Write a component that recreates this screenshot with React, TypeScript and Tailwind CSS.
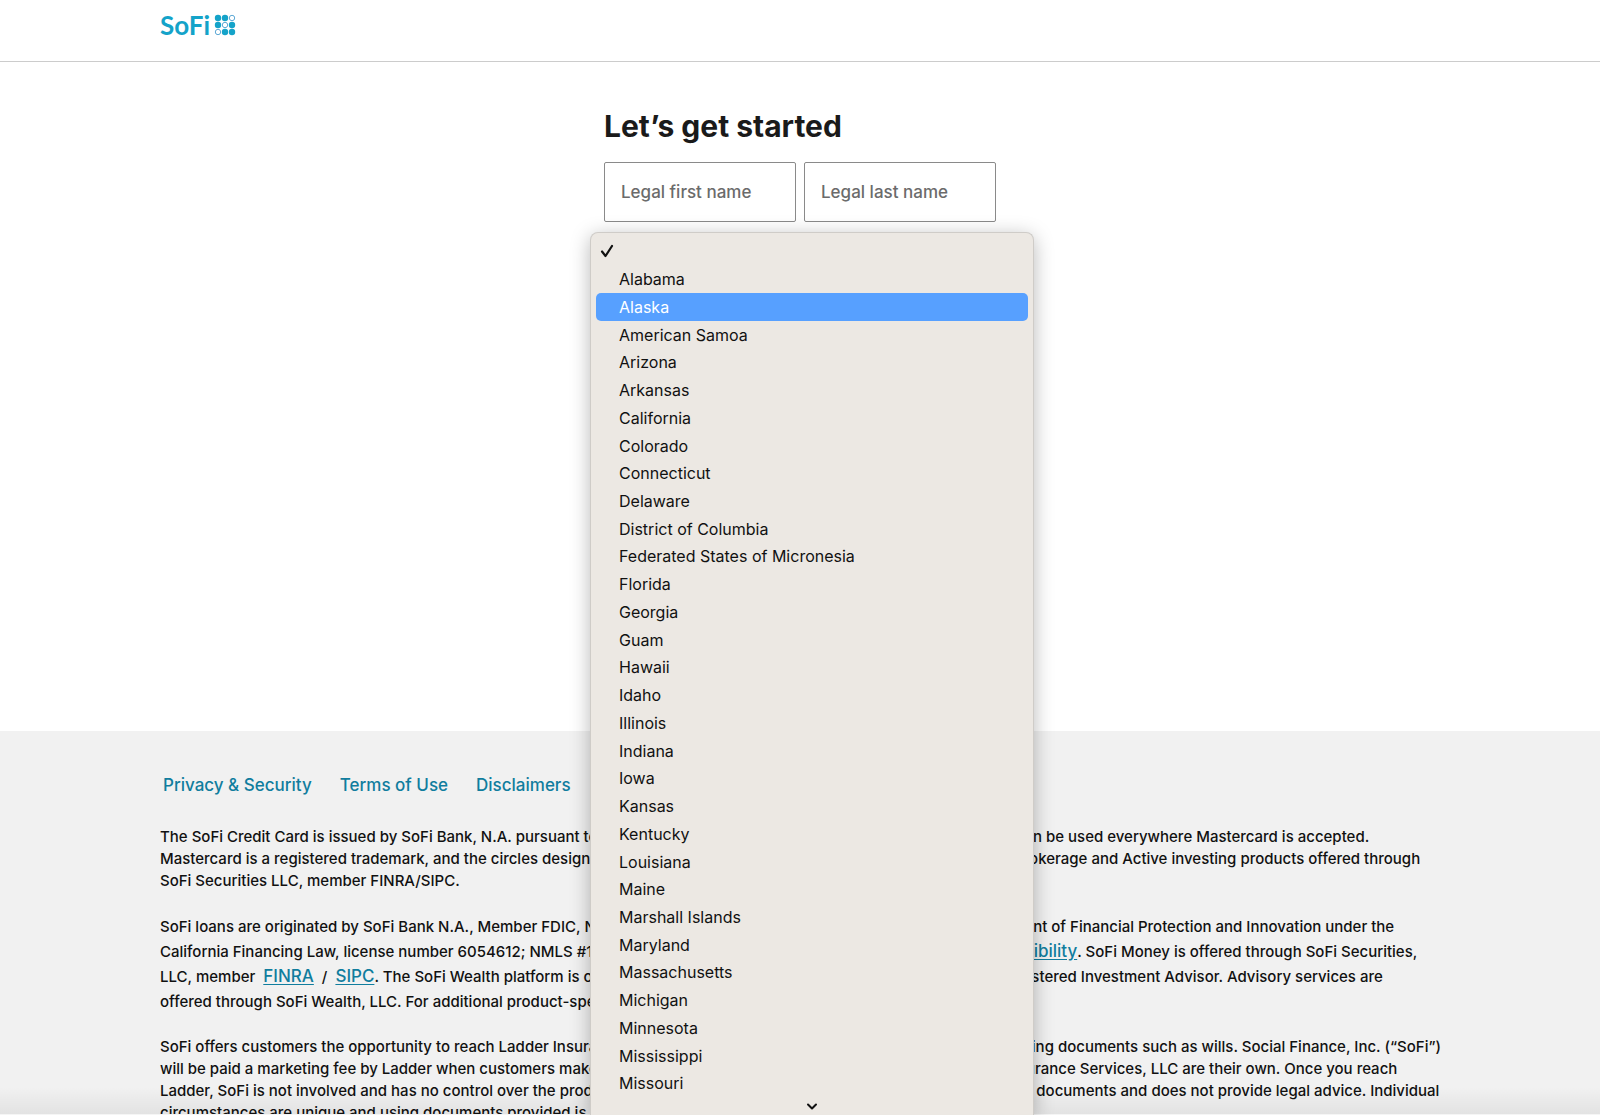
import { useState } from 'react';
import clsx from 'clsx';

const STATES = [
  'Alabama', 'Alaska', 'American Samoa', 'Arizona', 'Arkansas', 'California', 'Colorado', 'Connecticut',
  'Delaware', 'District of Columbia', 'Federated States of Micronesia', 'Florida', 'Georgia', 'Guam',
  'Hawaii', 'Idaho', 'Illinois', 'Indiana', 'Iowa', 'Kansas', 'Kentucky', 'Louisiana', 'Maine',
  'Marshall Islands', 'Maryland', 'Massachusetts', 'Michigan', 'Minnesota', 'Mississippi', 'Missouri',
];

const DOTS = [
  { x: 4, y: 4 }, { x: 11, y: 4 }, { x: 18, y: 4, hollow: true },
  { x: 4, y: 11 }, { x: 11, y: 11, hollow: true }, { x: 18, y: 11 },
  { x: 4, y: 18, hollow: true }, { x: 11, y: 18 }, { x: 18, y: 18 },
];

function Logo() {
  return (
    <a href="#" aria-label="SoFi" className="flex items-center gap-1 font-['Lato',sans-serif] text-[#14a3c9]">
      <span className="text-[26px] leading-8 font-bold">SoFi</span>
      <svg width="22" height="22" viewBox="0 0 22 22" aria-hidden="true">
        {DOTS.map((d) => (
          <circle
            key={`${d.x}-${d.y}`}
            cx={d.x}
            cy={d.y}
            r={d.hollow ? 2.7 : 3.2}
            fill={d.hollow ? 'none' : 'currentColor'}
            stroke={d.hollow ? '#4d9fd0' : 'none'}
            strokeWidth="0.9"
          />
        ))}
      </svg>
    </a>
  );
}

function NameField({ name, label }: { name: string; label: string }) {
  return (
    <input
      name={name}
      type="text"
      aria-label={label}
      placeholder={label}
      className="h-[60px] min-w-0 flex-1 rounded-xs border border-[#8a8a8a] px-4 text-[17px] font-medium text-[#1a1a1a] placeholder:text-[#6b6b6b]"
    />
  );
}

function StateMenu({ active, setActive }: { active: string; setActive: (s: string) => void }) {
  return (
    <div className="absolute top-[232px] bottom-0 left-1/2 ml-[-210px] flex w-[444px] flex-col rounded-t-lg border border-b-0 border-[#cfccc8] bg-[#ece8e3] px-[5px] pt-[5px] text-[16px] text-[#111] shadow-[0_4px_20px_rgba(0,0,0,0.28)]">
      <ul role="listbox" aria-label="State" className="flex min-h-0 flex-1 flex-col">
        <li role="option" aria-selected="true" className="flex flex-1 items-center pb-px pl-1">
          <svg width="14" height="14" viewBox="0 0 14 14" fill="none" stroke="currentColor" strokeWidth="2.2" strokeLinecap="round" strokeLinejoin="round">
            <path d="M2 7.5 L5.5 12 L12 2" />
          </svg>
        </li>
        {STATES.map((state) => (
          <li
            key={state}
            role="option"
            aria-selected="false"
            onMouseEnter={() => setActive(state)}
            className={clsx(
              'flex flex-1 items-center rounded-[5px] pb-px pl-[23px] leading-5',
              state === active && 'bg-[#57a0ff] text-white'
            )}
          >
            {state}
          </li>
        ))}
      </ul>
      <div className="flex h-[17px] justify-center pt-1">
        <svg width="12" height="9" viewBox="0 0 12 9" fill="none" stroke="currentColor" strokeWidth="2" strokeLinecap="round" strokeLinejoin="round">
          <path d="M2 2.5 L6 6.5 L10 2.5" />
        </svg>
      </div>
    </div>
  );
}

function TextLink({ children }: { children: string }) {
  return <a href="#" className="text-[17px] leading-none text-[#107d9e] underline underline-offset-2">{children}</a>;
}

export default function App() {
  const [active, setActive] = useState('Alaska');

  return (
    <div className="relative flex h-screen flex-col overflow-hidden bg-white font-['Inter',sans-serif] text-[#1a1a1a]">
      <header className="flex h-[62px] shrink-0 items-start border-b border-[#cccccc] px-[10%] pt-[9px]">
        <Logo />
      </header>

      <main className="h-[669px] shrink-0 pt-[44px]">
        <form className="mx-auto flex w-[392px] flex-col">
          <h1 className="text-[30px] leading-10 font-bold">Let’s get started</h1>
          <div className="mt-4 flex gap-2">
            <NameField name="first" label="Legal first name" />
            <NameField name="last" label="Legal last name" />
          </div>
          <select aria-label="State" className="mt-4 h-[60px] rounded-xs border border-[#8a8a8a] px-4">
            <option></option>
            {STATES.map((s) => <option key={s}>{s}</option>)}
          </select>
        </form>
      </main>

      <footer className="shrink-0 bg-[#f1f1f1] px-[10%] pt-[42px] text-[15px] font-medium whitespace-nowrap text-[#111]">
        <nav className="flex gap-7 pl-[3px] text-[17px] leading-6 text-[#107d9e]">
          <a href="#">Privacy &amp; Security</a>
          <a href="#">Terms of Use</a>
          <a href="#">Disclaimers</a>
        </nav>
        <div className="mt-[29px] flex flex-col gap-[22px] leading-[22px]">
          <p>
            The SoFi Credit Card is issued by SoFi Bank, N.A. pursuant to its license by Mastercard® International Incorporated and can be used everywhere Mastercard is accepted.<br />
            Mastercard is a registered trademark, and the circles design is the trademark of Mastercard International Incorporated. Brokerage and Active investing products offered through<br />
            SoFi Securities LLC, member FINRA/SIPC.
          </p>
          <p className="leading-[25px]">
            SoFi loans are originated by SoFi Bank N.A., Member FDIC, NMLS #696891, which are licensed by the California Department of Financial Protection and Innovation under the<br />
            California Financing Law, license number 6054612; NMLS #1121636 / Equal Housing Lender / State Licensing / <TextLink>Credit Eligibility</TextLink>. SoFi Money is offered through SoFi Securities,<br />
            LLC, member&nbsp; <TextLink>FINRA</TextLink> &nbsp;/&nbsp; <TextLink>SIPC</TextLink>. The SoFi Wealth platform is owned and operated by SoFi Wealth LLC, which is an SEC Registered Investment Advisor. Advisory services are<br />
            offered through SoFi Wealth, LLC. For additional product-specific details, see Disclaimers.
          </p>
          <p>
            SoFi offers customers the opportunity to reach Ladder Insurance Services, LLC and Trust &amp; Will for preparing estate planning documents such as wills. Social Finance, Inc. (“SoFi”)<br />
            will be paid a marketing fee by Ladder when customers make any purchase through this link. All services from Ladder Insurance Services, LLC are their own. Once you reach<br />
            Ladder, SoFi is not involved and has no control over the products and services involved. The service is generally limited to documents and does not provide legal advice. Individual<br />
            circumstances are unique and using documents provided is not a substitute for legal advice.
          </p>
        </div>
      </footer>

      <div className="absolute inset-x-0 bottom-0 h-7 border-b border-[#f5f5f5] bg-linear-to-b from-transparent to-black/6" />
      <StateMenu active={active} setActive={setActive} />
    </div>
  );
}
